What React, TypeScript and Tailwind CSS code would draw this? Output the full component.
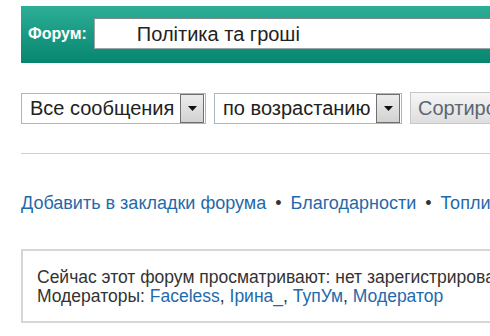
import React from "react";

function Arrow() {
  return (
    <span className="flex h-[29px] w-[24px] shrink-0 items-center justify-center border border-[#6f6f6f] bg-[linear-gradient(#ececec,#d2d2d2)]">
      <svg width="9" height="5" viewBox="0 0 9 5">
        <path d="M0 0h9L4.5 5z" fill="#111" />
      </svg>
    </span>
  );
}

function Select({ label, width }: { label: string; width: string }) {
  return (
    <div className={`flex h-[31px] items-center justify-between border border-[#a9b7bf] bg-white pl-[8px] pr-px ${width}`}>
      <span className="text-[20px] leading-none text-[#222]">{label}</span>
      <Arrow />
    </div>
  );
}

export default function App() {
  return (
    <div
      className="h-[336px] w-[490px] overflow-hidden bg-white pl-[21px] pt-[6px]"
      style={{ fontFamily: '"Liberation Sans", Arial, sans-serif' }}
    >
      <div className="w-[1000px]">
        <div className="flex h-[57px] items-start gap-[7px] bg-[linear-gradient(#2cae97,#07856f)] pl-[7px] pt-[12px]">
          <span className="mt-[6px] text-[16px] font-bold leading-[20px] text-white">Форум:</span>
          <div className="flex h-[31px] flex-1 items-center border border-[#9aa6a6] border-t-[#7e8a8a] bg-white pl-[42px]">
            <span className="text-[20px] leading-none text-[#222]">Політика та гроші</span>
          </div>
        </div>

        <div className="mt-[29px] flex items-center gap-[8px]">
          <Select label="Все сообщения" width="w-[185px]" />
          <Select label="по возрастанию" width="w-[188px]" />
          <button className="h-[32px] w-[160px] border border-[#c4c8cc] bg-[linear-gradient(#f6f6f6,#dedede)] pl-[7px] text-left text-[20px] leading-none text-[#5b6673]">
            Сортировать
          </button>
        </div>

        <div className="mt-[29px] border-t border-[#cfcfcf]" />

        <div className="mt-[39px] flex items-center text-[18px] leading-[21px] text-[#1f6aab]">
          <a>Добавить в закладки форума</a>
          <span className="mx-[9px] text-[#333]">•</span>
          <a>Благодарности</a>
          <span className="mx-[9px] text-[#333]">•</span>
          <a>Топлисты</a>
        </div>

        <div className="mt-[35px] h-[74px] border-2 border-[#d6d6d6] pl-[14px] pt-[17px] text-[17.5px] leading-[19px] text-[#333]">
          <p>Сейчас этот форум просматривают: нет зарегистрированных пользователей и гости: 2</p>
          <p>
            Модераторы: <span className="text-[#1f6aab]">Faceless</span>,{" "}
            <span className="text-[#1f6aab]">Ірина_</span>,{" "}
            <span className="text-[#1f6aab]">ТупУм</span>,{" "}
            <span className="text-[#1f6aab]">Модератор</span>
          </p>
        </div>
      </div>
    </div>
  );
}
